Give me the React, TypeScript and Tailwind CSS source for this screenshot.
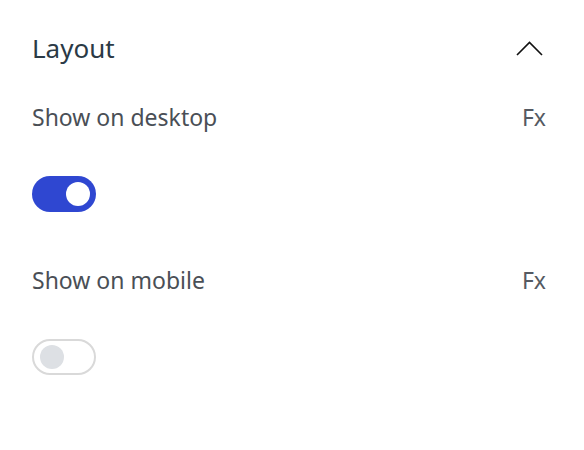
import React, { useState } from 'react';

const Toggle = ({ on, onChange }: { on: boolean; onChange: () => void }) => (
  <button
    onClick={onChange}
    className={`flex items-center w-16 h-9 rounded-full p-[6px] transition-colors ${
      on ? 'bg-[#2f47d1] justify-end' : 'bg-white border-2 border-[#d9d9d9] p-[4px] justify-start'
    }`}
  >
    <span className={`block w-6 h-6 rounded-full ${on ? 'bg-white' : 'bg-[#dde0e4]'}`} />
  </button>
);

const Row = ({ label, on, onChange }: { label: string; on: boolean; onChange: () => void }) => (
  <div>
    <div className="flex items-center justify-between h-[30px]">
      <span className="text-[23px] text-[#4a4f56]">{label}</span>
      <span className="text-[23px] text-[#555a62] pr-[6px]">Fx</span>
    </div>
    <div className="mt-[44px]">
      <Toggle on={on} onChange={onChange} />
    </div>
  </div>
);

export default function App() {
  const [desktop, setDesktop] = useState(true);
  const [mobile, setMobile] = useState(false);
  const [open, setOpen] = useState(true);

  return (
    <div className="w-[584px] h-[450px] bg-white pl-8 pr-8 pt-[31px]" style={{ fontFamily: '"Noto Sans", sans-serif' }}>
      <div className="flex items-center justify-between h-[34px]">
        <h2 className="text-[26px] text-[#2b3a46]">Layout</h2>
        <button onClick={() => setOpen(!open)} className="pr-[9px]">
          <svg width="27" height="15" viewBox="0 0 27 15" fill="none" stroke="#111" strokeWidth="1.6">
            <path d="M1 14L13.5 1.5L26 14" />
          </svg>
        </button>
      </div>
      {open && (
        <div className="mt-[37px] flex flex-col gap-[53px]">
          <Row label="Show on desktop" on={desktop} onChange={() => setDesktop(!desktop)} />
          <Row label="Show on mobile" on={mobile} onChange={() => setMobile(!mobile)} />
        </div>
      )}
    </div>
  );
}
